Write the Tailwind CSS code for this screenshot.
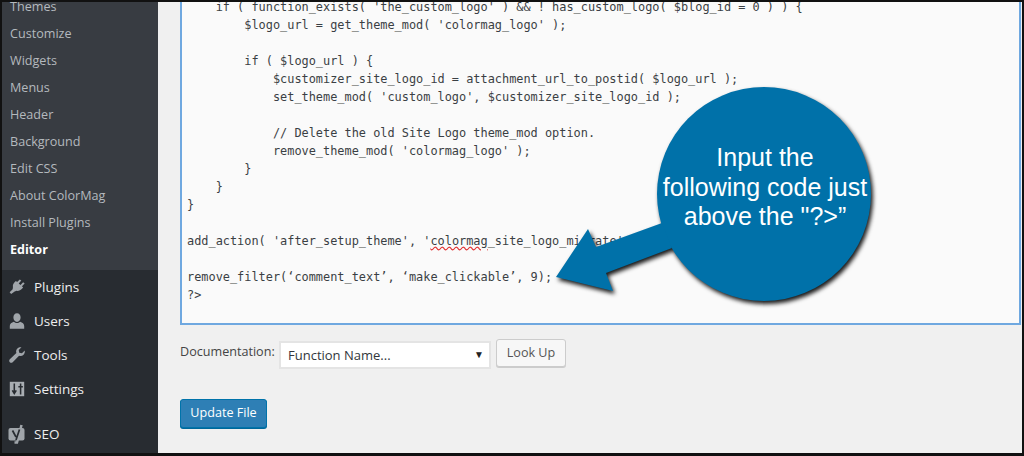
<!DOCTYPE html>
<html>
<head>
<meta charset="utf-8">
<script src="https://cdn.jsdelivr.net/npm/@tailwindcss/browser@4"></script>
</head>
<body class="overflow-hidden">
<div class="relative w-[1024px] h-[456px] overflow-hidden flex bg-[#f0f0f0] font-['Open_Sans',sans-serif]">
  <aside class="w-[158px] shrink-0 flex flex-col bg-[#282c31] pl-[2px]">
    <ul class="h-[270px] bg-[#383c42] text-[12.6px] leading-[27px] text-[#b4b9be] pl-[8px] overflow-hidden">
      <li class="-mt-[7px]">Themes</li>
      <li>Customize</li>
      <li>Widgets</li>
      <li>Menus</li>
      <li>Header</li>
      <li>Background</li>
      <li>Edit CSS</li>
      <li>About ColorMag</li>
      <li>Install Plugins</li>
      <li class="font-bold text-white">Editor</li>
    </ul>
    <ul class="text-[13.5px] text-[#eeeeee]">
      <li class="flex items-center h-[34px]">
        <svg class="w-[18px] h-[18px] ml-[6px] mr-[8px]" viewBox="0 0 20 20" fill="#a0a5aa"><path d="M13.100 1.600l1.700 1.300-2.900 3.300 2 1.700 2.900-3.300 1.700 1.400-3 3.300 1.300 1.200-1 1.100c-1.700 1.800-3.900 3-6.200 2.700l-2.200.7-3.900 2.900-1.700-2.100 3.400-3.400.3-2.300c-.5-2 .5-4.300 2.300-5.900l1-1 1.300 1.200z"/></svg>
        <span>Plugins</span>
      </li>
      <li class="flex items-center h-[34px]">
        <svg class="w-[18px] h-[18px] ml-[6px] mr-[8px]" viewBox="0 0 20 20" fill="#a0a5aa"><path d="M10 1.500c2.500 0 4 2 4 4.500s-1.700 5-4 5-4-2.500-4-5 1.500-4.500 4-4.500zM13.500 10.800c2.500.8 4.500 2.200 4.500 4.700v3H2v-3c0-2.500 2-3.900 4.500-4.700 1 .9 2.200 1.500 3.500 1.500s2.500-.6 3.500-1.500z"/></svg>
        <span>Users</span>
      </li>
      <li class="flex items-center h-[34px]">
        <svg class="w-[18px] h-[18px] ml-[6px] mr-[8px]" viewBox="0 0 20 20" fill="#a0a5aa"><path d="M18.600 5c.3 1.700-.1 3.400-1.300 4.600-1.400 1.400-3.300 1.700-5 1.100L5.200 18c-.9.900-2.300.9-3.200 0-.9-.9-.9-2.300 0-3.200l7.300-7.100c-.6-1.700-.3-3.600 1.100-5C11.600 1.500 13.300 1.100 15 1.400l-3.100 3.100.6 3 3 .6L18.600 5z"/></svg>
        <span>Tools</span>
      </li>
      <li class="flex items-center h-[34px]">
        <svg class="w-[18px] h-[18px] ml-[6px] mr-[8px]" viewBox="0 0 20 20"><rect x="2" y="2" width="16" height="16" fill="#a8adb2"/><path d="M7 4v11M4.800 11.500L7 15l2.200-3.500M14 4v12M11.500 7.500h5" fill="none" stroke="#282c31" stroke-width="1.700"/></svg>
        <span>Settings</span>
      </li>
      <li class="flex items-center h-[34px] mt-[11px]">
        <svg class="w-[20px] h-[20px] ml-[5px] mr-[7px]" viewBox="0 0 20 20"><rect x="1.500" y="4" width="16" height="12.500" rx="2" fill="#a0a5aa"/><path d="M14.500 1L10 18.500H7.500" fill="none" stroke="#a0a5aa" stroke-width="2.500"/><path d="M5.500 6.500L9 13M12.500 5.500L9 16" fill="none" stroke="#282c31" stroke-width="1.700"/></svg>
        <span>SEO</span>
      </li>
    </ul>
  </aside>
  <main class="flex-1 pl-[22px] pr-[3px] flex flex-col">
    <div class="h-[325px] border-2 border-t-0 border-[#6fa8e0] bg-[#fafafa] pl-[5px] overflow-hidden">
      <pre class="-mt-[2px] font-['DejaVu_Sans_Mono',monospace] text-[11.9px] leading-[18px] text-[#3a3f44]">    if ( function_exists( 'the_custom_logo' ) &amp;&amp; ! has_custom_logo( $blog_id = 0 ) ) {
        $logo_url = get_theme_mod( 'colormag_logo' );

        if ( $logo_url ) {
            $customizer_site_logo_id = attachment_url_to_postid( $logo_url );
            set_theme_mod( 'custom_logo', $customizer_site_logo_id );

            // Delete the old Site Logo theme_mod option.
            remove_theme_mod( 'colormag_logo' );
        }
    }
}

add_action( 'after_setup_theme', '<span class="underline decoration-wavy decoration-[#e03030]">colormag</span>_site_logo_migrate' );

remove_filter(‘comment_text’, ‘make_clickable’, 9);
?&gt;</pre>
    </div>
    <div class="flex items-start mt-[14px] text-[12.6px]">
      <label class="w-[99px] mt-[3px] font-medium text-[#444444] leading-[20px] whitespace-nowrap">Documentation:</label>
      <div class="relative w-[212px] h-[28px] mt-[2px] border-2 border-[#e4e4e4] bg-white pl-[7px] text-[13px] leading-[24px] text-[#32373c]">Function Name...<span class="absolute right-[5px] top-[-1px] text-[10px] text-[#222222]">▼</span></div>
      <button class="ml-[5px] w-[70px] h-[28px] border border-[#cccccc] rounded-[3px] bg-[#f7f7f7] text-[#555555] shadow-[0_1px_0_#cccccc]">Look Up</button>
    </div>
    <button class="mt-[30px] w-[87px] h-[29px] rounded-[3px] border border-[#0073aa] bg-[#2e7fb5] text-white text-[12.6px] shadow-[0_1px_0_#006799]">Update File</button>
  </main>
  <svg class="absolute left-[540px] top-[70px] w-[350px] h-[250px] drop-shadow-[2px_3px_2px_rgba(0,0,0,0.9)]" viewBox="540 70 350 250" fill="#0071a9"><circle cx="764" cy="194" r="107"/><polygon points="556,277 588,229 596,247 662,223 672,248 606,273 613,291"/></svg>
  <div class="absolute left-[658px] top-[143px] w-[214px] text-center font-['Liberation_Sans',sans-serif] text-[25px] leading-[29.5px] text-white">Input the<br>following code just<br>above the "?&gt;”</div>
  <div class="absolute inset-0 border-2 border-b-[3px] border-[#111111] pointer-events-none"></div>
</div>
</body>
</html>
